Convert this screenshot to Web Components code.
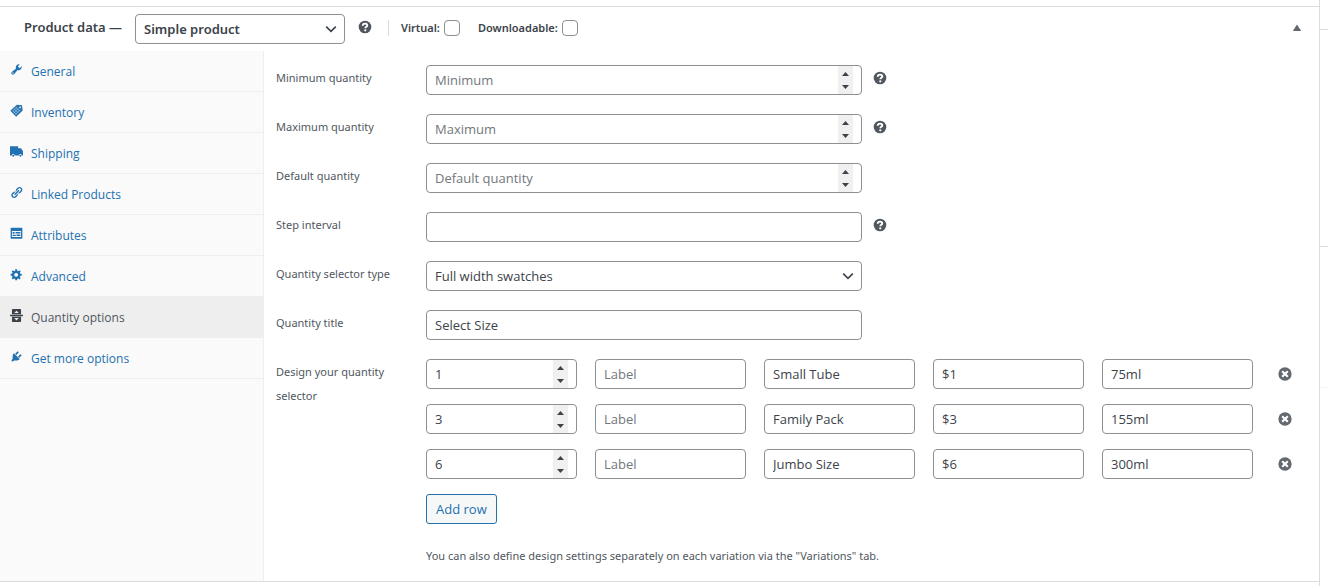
<!DOCTYPE html>
<html lang="en">
<head>
<meta charset="utf-8">
<meta name="viewport" content="width=device-width, initial-scale=1">
<title>Product data</title>
<style>
  html, body { margin: 0; background: #fff; }
  body {
    font: 12px/24px "Open Sans", "Noto Sans", sans-serif;
    color: #3c434a;
    --line: #dcdcde;
    --soft-line: #eee;
    --field-line: #8c8f94;
    --link: #2271b1;
    --label-font: "Noto Sans", "Open Sans", sans-serif;
    --text-small: 11px;
    --text-field: 13px;
  }
</style>
</head>
<body>
<edit-screen>
  <product-panel>
    <product-header slot="header"></product-header>
    <tab-list slot="tabs">
      <tab-item icon="wrench">General</tab-item>
      <tab-item icon="tag">Inventory</tab-item>
      <tab-item icon="truck">Shipping</tab-item>
      <tab-item icon="link">Linked Products</tab-item>
      <tab-item icon="card">Attributes</tab-item>
      <tab-item icon="gear">Advanced</tab-item>
      <tab-item icon="split" active>Quantity options</tab-item>
      <tab-item icon="plug">Get more options</tab-item>
    </tab-list>
    <form-field label="Minimum quantity" type="number" placeholder="Minimum" help></form-field>
    <form-field label="Maximum quantity" type="number" placeholder="Maximum" help></form-field>
    <form-field label="Default quantity" type="number" placeholder="Default quantity"></form-field>
    <form-field label="Step interval" type="text" help></form-field>
    <form-field label="Quantity selector type" type="select" value="Full width swatches"></form-field>
    <form-field label="Quantity title" type="text" value="Select Size"></form-field>
    <quantity-designer label="Design your quantity selector">
      <quantity-row quantity="1" name="Small Tube" price="$1" size="75ml"></quantity-row>
      <quantity-row quantity="3" name="Family Pack" price="$3" size="155ml"></quantity-row>
      <quantity-row quantity="6" name="Jumbo Size" price="$6" size="300ml"></quantity-row>
      <span slot="note">You can also define design settings separately on each variation via the "Variations" tab.</span>
    </quantity-designer>
  </product-panel>
</edit-screen>

<script>
const ICONS = {
  wrench: '<path d="M16.68 9.77c-1.34 1.34-3.3 1.67-4.95.99l-5.41 6.52c-.99.99-2.59.99-3.58 0s-.99-2.59 0-3.57l6.52-5.42c-.68-1.65-.35-3.61.99-4.95 1.28-1.28 3.12-1.62 4.72-1.06l-2.89 2.89 2.82 2.82 2.86-2.87c.53 1.58.18 3.39-1.08 4.65zM3.81 16.21c.4.39 1.04.39 1.43 0 .4-.4.4-1.04 0-1.43-.39-.4-1.03-.4-1.43 0-.39.39-.39 1.03 0 1.43z"/>',
  tag: '<path fill-rule="evenodd" d="M10.500 1 18.500 2 19.500 10 9.500 19.500 .5 10.500zM15.500 4a1.300 1.300 0 1 0 .01 0z"/><path d="M4.500 10.500l5.500 5.500M7 8l5.500 5.500M9.500 5.500l5.500 5.500M6 13.500l7-7M8.500 16l7-7M4 11l7-7" fill="none" stroke="#fafafa" stroke-width=".7"/>',
  truck: '<path fill-rule="evenodd" d="M0 2h12.500v3H17l3 4.500V16h-2a2 2 0 0 0-4 0H7a2 2 0 0 0-4 0H0z"/><circle cx="5" cy="16.500" r="1.500"/><circle cx="16" cy="16.500" r="1.500"/>',
  link: '<path d="M17.740 2.760c1.680 1.690 1.680 4.410 0 6.100l-1.530 1.520c-1.120 1.120-2.700 1.470-4.140 1.090l2.620-2.610.76-.77.76-.76c.84-.84.84-2.200 0-3.040-.84-.85-2.200-.85-3.040 0l-.77.76-3.380 3.380c-.37-1.440-.02-3.020 1.100-4.140l1.520-1.530c1.690-1.680 4.420-1.680 6.100 0zM8.590 13.430l5.340-5.340c.42-.42.42-1.100 0-1.520-.44-.43-1.130-.39-1.530 0l-5.330 5.340c-.42.42-.42 1.100 0 1.520.44.43 1.130.39 1.520 0zm-.76 2.290l4.140-4.150c.38 1.440.03 3.020-1.090 4.140l-1.520 1.530c-1.690 1.680-4.410 1.680-6.100 0-1.680-1.680-1.680-4.420 0-6.100l1.530-1.520c1.120-1.120 2.700-1.470 4.140-1.100l-4.140 4.150c-.85.84-.85 2.200 0 3.050.84.84 2.200.84 3.040 0z"/>',
  card: '<path fill-rule="evenodd" d="M2 1h16q1 0 1 1v15q0 1-1 1H2q-1 0-1-1V2q0-1 1-1zM3 6v9.500h14V6z"/><path d="M4 7.500h3v3H4zM4 12h5v2H4zM8.500 7.500H16v2.500H8.500zM10 11.500h6V14h-6z"/>',
  gear: '<path d="M18 12h-2.180c-.17.7-.44 1.350-.81 1.930l1.540 1.540-2.100 2.100-1.540-1.540c-.58.36-1.230.63-1.910.79V19H8v-2.180c-.68-.16-1.330-.43-1.910-.79l-1.540 1.540-2.120-2.120 1.540-1.540c-.36-.58-.63-1.230-.79-1.910H1V9.030h2.170c.16-.7.44-1.350.8-1.940L2.430 5.550l2.100-2.100 1.540 1.540c.58-.37 1.240-.64 1.930-.81V2h3v2.180c.68.16 1.330.43 1.910.79l1.540-1.540 2.120 2.120-1.540 1.540c.36.59.64 1.240.8 1.940H18V12zm-8.500 1.500c1.660 0 3-1.340 3-3s-1.340-3-3-3-3 1.340-3 3 1.340 3 3 3z"/>',
  split: '<path fill-rule="evenodd" d="M4 0h12q1 0 1 1v7H3V1q0-1 1-1zM10 2.500 6.500 6h7zM0 9h20v2H0zM3 12h14v7q0 1-1 1H4q-1 0-1-1zM10 17.500l-3.500-3.500h7z"/>',
  plug: '<path d="M13.110 4.360L9.870 7.600 8 5.730l3.240-3.240c.35-.34 1.050-.2 1.560.32.52.51.66 1.210.31 1.550zm-8 1.770l.91-1.120 9.010 9.010-1.190.84c-.71.71-2.630 1.160-3.820 1.160H6.140L4.900 17.260c-.59.59-1.540.59-2.120 0-.59-.58-.59-1.530 0-2.120l1.240-1.240v-3.880c0-1.130.4-3.190 1.090-3.890zm7.260 3.970l3.240-3.240c.34-.35 1.040-.21 1.550.31.52.51.66 1.210.31 1.550l-3.240 3.250z"/>',
  help: '<circle cx="10" cy="10" r="9"/><path d="M6.800 8.200C6.800 6.200 8.300 5.200 10.100 5.200s3.100 1 3.100 2.600c0 2-2.700 1.900-2.700 3.900" fill="none" stroke="#fff" stroke-width="2.700"/><circle cx="10.400" cy="14.700" r="1.600" fill="#fff"/>',
  dismiss: '<circle cx="10" cy="10" r="9.500"/><path d="M6 6l8 8M14 6l-8 8" stroke="#fff" stroke-width="3"/>',
  up: '<path d="M10 4l7 11H3z"/>'
};

const FIELD_CSS = `
  input, select {
    box-sizing: border-box; width: 100%; height: 30px; margin: 0; padding: 0 8px;
    border: 1px solid var(--field-line); border-radius: 4px; background: #fff;
    color: #3c434a; font: inherit; font-size: var(--text-field); min-width: 0; outline: none;
  }
  input::placeholder { color: #72777c; opacity: 1; }
  input[type=number] { appearance: textfield; }
  input[type=number]::-webkit-inner-spin-button {
    appearance: none; opacity: 1; width: 15px; height: 28px; margin: 0;
    background: #f0f0f0 url("data:image/svg+xml,%3Csvg xmlns='http://www.w3.org/2000/svg' width='15' height='28' viewBox='0 0 15 28'%3E%3Cpath d='M4 10l3.500-4L11 10zM4 19h7l-3.500 4z' fill='%233c434a'/%3E%3C/svg%3E") no-repeat;
  }
  select {
    appearance: none; padding-right: 24px;
    background: #fff url("data:image/svg+xml,%3Csvg xmlns='http://www.w3.org/2000/svg' width='20' height='20' viewBox='0 0 20 20'%3E%3Cpath d='M4 7l6 6 6-6' fill='none' stroke='%233c434a' stroke-width='2'/%3E%3C/svg%3E") no-repeat right 5px center / 16px 16px;
  }`;

class Base extends HTMLElement {
  connectedCallback() {
    if (this.shadowRoot) return;
    this.attachShadow({ mode: 'open' }).innerHTML = this.view();
  }
  attr(name) { return this.getAttribute(name) || ''; }
}

customElements.define('ui-icon', class extends Base {
  view() {
    return `<style>
      :host { display: block; flex: none; width: 14px; height: 14px; }
      svg { display: block; width: 100%; height: 100%; fill: currentColor; }
    </style><svg viewBox="0 0 20 20" aria-hidden="true">${ICONS[this.attr('name')]}</svg>`;
  }
});

customElements.define('edit-screen', class extends Base {
  view() {
    return `<style>
      :host { display: flex; min-height: 100vh; }
      main { flex: 1; min-width: 0; border-right: 1px solid var(--line); padding-top: 6px; box-sizing: border-box; }
      aside { flex: 0 0 8px; padding-top: 29px; box-sizing: border-box; }
      div { border-top: 1px solid var(--line); height: 216px; }
      div + div { height: 140px; }
      div + div + div { border-color: #f6f6f6; }
    </style><main><slot></slot></main><aside><div></div><div></div><div></div></aside>`;
  }
});

customElements.define('product-panel', class extends Base {
  view() {
    return `<style>
      :host { display: block; border: solid var(--line); border-width: 1px 0; }
      .body { display: grid; grid-template-columns: 264px minmax(0, 1fr); }
      .fields { display: grid; gap: 19px; padding: 14px 21px 13px 12px; align-content: start; }
    </style>
    <slot name="header"></slot>
    <div class="body"><slot name="tabs"></slot><section class="fields"><slot></slot></section></div>`;
  }
});

customElements.define('product-header', class extends Base {
  view() {
    return `<style>${FIELD_CSS}
      :host { display: flex; align-items: center; height: 44px; padding: 0 16px 2px 24px; box-sizing: border-box; font-family: var(--label-font); font-weight: 600; }
      h2 { flex: 0 0 111px; margin: 0; padding-bottom: 2px; font-size: 13px; font-weight: 600; }
      select { flex: 0 0 210px; width: 210px; margin-top: 2px; font-weight: 600; }
      ui-icon { color: #50575e; margin: 0 0 2px 13px; }
      .options { display: flex; gap: 18px; margin-left: 16px; padding-left: 12px; height: 16px; align-items: center; border-left: 1px solid var(--line); }
      label { display: flex; align-items: center; gap: 4px; font-size: var(--text-small); }
      input[type=checkbox] { appearance: none; flex: none; width: 16px; height: 16px; padding: 0; }
      button { margin-left: auto; padding: 0; border: 0; background: none; }
      button ui-icon { margin: 0; width: 12px; height: 12px; color: #646970; }
    </style>
    <h2>Product data —</h2>
    <select aria-label="Product type"><option>Simple product</option></select>
    <ui-icon name="help"></ui-icon>
    <div class="options">
      <label>Virtual: <input type="checkbox"></label>
      <label>Downloadable: <input type="checkbox"></label>
    </div>
    <button type="button" aria-label="Toggle panel"><ui-icon name="up"></ui-icon></button>`;
  }
});

customElements.define('tab-list', class extends Base {
  view() {
    return `<style>
      :host { display: block; background: #fafafa; border-right: 1px solid var(--soft-line); }
    </style><nav><slot></slot></nav>`;
  }
});

customElements.define('tab-item', class extends Base {
  view() {
    return `<style>
      :host { display: block; color: var(--link); border-bottom: 1px solid var(--soft-line); }
      :host([active]) { background: #eee; color: #50575e; }
      a { display: flex; gap: 8px; height: 40px; padding: 2px 10px 0; box-sizing: border-box; align-items: center; color: inherit; text-decoration: none; }
      ui-icon { width: 13px; height: 13px; margin-bottom: 5px; }
      :host([active]) ui-icon { color: #3c434a; }
    </style><a href="#"><ui-icon name="${this.attr('icon')}"></ui-icon><span><slot></slot></span></a>`;
  }
});

customElements.define('form-field', class extends Base {
  view() {
    const type = this.attr('type');
    const control = type === 'select'
      ? `<select id="control"><option>${this.attr('value')}</option></select>`
      : `<input id="control" type="${type}" placeholder="${this.attr('placeholder')}" value="${this.attr('value')}">`;
    return `<style>${FIELD_CSS}
      :host { display: grid; grid-template-columns: 150px minmax(0, 1fr); }
      label { padding-top: 1px; font-family: var(--label-font); font-size: var(--text-small); color: #50575e; }
      .control { display: grid; grid-template-columns: 50% auto; justify-content: start; gap: 11px; }
      ui-icon { color: #50575e; margin-top: 6px; }
    </style>
    <label for="control">${this.attr('label')}</label>
    <div class="control">${control}${this.hasAttribute('help') ? '<ui-icon name="help"></ui-icon>' : ''}</div>`;
  }
});

customElements.define('quantity-designer', class extends Base {
  view() {
    return `<style>
      :host { display: grid; grid-template-columns: 150px minmax(0, 1fr); font-size: var(--text-small); }
      .label { padding: 1px 20px 0 0; font-family: var(--label-font); color: #50575e; }
      .rows { display: grid; gap: 15px; }
      button {
        justify-self: start; box-sizing: border-box; height: 30px; padding: 0 9px; border: 1px solid var(--link);
        border-radius: 3px; background: #f6f7f7; color: var(--link); font: inherit; font-size: var(--text-field);
      }
      p { margin: 5px 0 0; font-family: var(--label-font); color: #50575e; }
    </style>
    <span class="label">${this.attr('label')}</span>
    <div class="rows"><slot></slot><button type="button">Add row</button><p><slot name="note"></slot></p></div>`;
  }
});

customElements.define('quantity-row', class extends Base {
  view() {
    return `<style>${FIELD_CSS}
      :host { display: grid; grid-template-columns: repeat(5, minmax(0, 1fr)) 27px; gap: 18px; align-items: center; }
      button { padding: 0; border: 0; background: none; justify-self: center; color: #646970; }
    </style>
    <input type="number" aria-label="Quantity" value="${this.attr('quantity')}">
    <input type="text" aria-label="Label" placeholder="Label">
    <input type="text" aria-label="Name" value="${this.attr('name')}">
    <input type="text" aria-label="Price" value="${this.attr('price')}">
    <input type="text" aria-label="Size" value="${this.attr('size')}">
    <button type="button" aria-label="Remove row"><ui-icon name="dismiss"></ui-icon></button>`;
  }
});
</script>
</body>
</html>
